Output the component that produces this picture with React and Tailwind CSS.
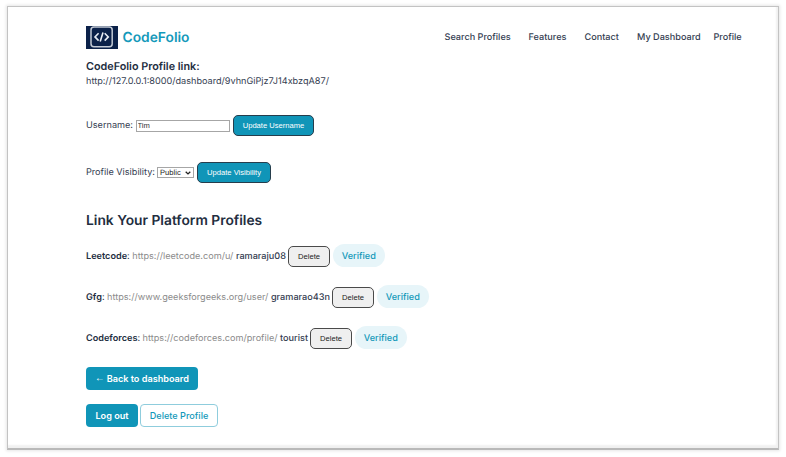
const navItems = [
  { label: "Search Profiles", cls: "w-[84px]" },
  { label: "Features", cls: "w-[56px]" },
  { label: "Contact", cls: "w-[52.5px]" },
  { label: "My Dashboard", cls: "w-[76.5px]" },
  { label: "Profile", cls: "w-[29px]" },
];

const platforms = [
  { name: "Leetcode", url: "https://leetcode.com/u/", user: "ramaraju08", text: "w-[202px]" },
  { name: "Gfg", url: "https://www.geeksforgeeks.org/user/", user: "gramarao43n", text: "w-[246px]" },
  { name: "Codeforces", url: "https://codeforces.com/profile/", user: "tourist", text: "w-[224px]" },
];

function Logo() {
  return (
    <svg width="32" height="23" viewBox="0 0 32 23" fill="none">
      <rect width="32" height="23" fill="#0b2149" />
      <rect x="5" y="1" width="21.2" height="19.7" rx="3" stroke="#c3cad5" strokeWidth="1.5" />
      <path d="M12.6 7.2 9 10.9l3.6 3.7M18.7 7.2l3.6 3.7-3.6 3.7M17 6.4l-2.8 9.2" stroke="#e8edf4" strokeWidth="1.6" />
    </svg>
  );
}

function SubmitButton({ children, className }) {
  return (
    <button
      className={`h-[21px] shrink-0 whitespace-nowrap rounded-[5px] border border-[#263d4c] bg-[#1095b8] font-['Liberation_Sans',Arial,sans-serif] text-[7.6px] text-white ${className}`}
    >
      {children}
    </button>
  );
}

export default function App() {
  return (
    <div className="h-[457px] w-[786px] overflow-hidden bg-white pl-[7px] pt-[6px] font-['Inter',sans-serif] text-[9.15px] leading-[14px] text-[#354052] [text-rendering:geometricPrecision]">
      <main className="h-[444px] w-[772px] border border-[#c3c3c3] border-b-2 border-b-[#b9b9b9] bg-white pl-[78px] pt-[19px] shadow-[0_0_3px_1px_rgba(0,0,0,0.1),inset_-2px_-3px_2px_rgba(0,0,0,0.06)]">
        <header className="flex h-[23px] items-center">
          <Logo />
          <span className="ml-[4.5px] w-[322px] shrink-0 text-[13.8px] font-semibold leading-5 text-[#1499ba]">CodeFolio</span>
          <nav className="flex whitespace-nowrap pt-[1px] font-medium">
            {navItems.map((item) => (
              <a key={item.label} className={`shrink-0 ${item.cls}`}>{item.label}</a>
            ))}
          </nav>
        </header>

        <h3 className="mt-[10px] text-[10.8px] font-semibold leading-[15px] text-[#222d40]">CodeFolio Profile link:</h3>
        <p className="mt-[1px]">http://127.0.0.1:8000/dashboard/9vhnGiPjz7J14xbzqA87/</p>

        <form className="mt-[26px] flex h-[21px] items-center">
          <label className="w-[49.5px] shrink-0 whitespace-nowrap">Username:</label>
          <input
            defaultValue="Tim"
            className="h-[12px] w-[94.5px] border border-[#a6a6a6] bg-white px-[1px] font-['Liberation_Sans',Arial,sans-serif] text-[7.6px] leading-[10px] text-[#333]"
          />
          <SubmitButton className="ml-[3px] w-[81px]">Update Username</SubmitButton>
        </form>

        <form className="mt-[26px] flex h-[21px] items-center">
          <label className="w-[71px] shrink-0 whitespace-nowrap pt-[1px]">Profile Visibility:</label>
          <div className="flex h-[11px] w-[37px] items-center justify-between border border-[#a6a6a6] pl-[2px] pr-[2px] font-['Liberation_Sans',Arial,sans-serif] text-[7.6px] leading-[10px] text-[#222]">
            <span>Public</span>
            <svg width="6" height="4" viewBox="0 0 6 4" fill="none">
              <path d="m.7.7 2.3 2.2L5.3.7" stroke="#222" strokeWidth="1.3" />
            </svg>
          </div>
          <SubmitButton className="ml-[3px] w-[74px]">Update Visibility</SubmitButton>
        </form>

        <h2 className="mt-[28px] text-[13.8px] font-semibold leading-5 text-[#222d40]">Link Your Platform Profiles</h2>

        <div className="mt-[13px] flex flex-col gap-[18px]">
          {platforms.map((p) => (
            <div key={p.name} className="flex h-[23px] items-center">
              <span className={`shrink-0 whitespace-nowrap pt-[2px] ${p.text}`}>
                <b className="font-semibold text-[#222d40]">{p.name}</b>: <span className="text-[#8b8b8b]">{p.url}</span>{" "}
                <span className="font-medium">{p.user}</span>
              </span>
              <button className="mt-[1px] h-[21px] w-[42px] rounded-[5px] border border-[#4a4a4a] bg-[#efefef] pt-[1px] font-['Liberation_Sans',Arial,sans-serif] text-[7.6px] text-[#222]">
                Delete
              </button>
              <span className="ml-[3px] h-[23px] w-[51.5px] rounded-full bg-[#e7f5f9] text-center font-medium leading-[25px] text-[#1499ba]">
                Verified
              </span>
            </div>
          ))}
        </div>

        <button className="mt-[18px] flex h-[23px] w-[112px] items-center justify-center gap-[2px] whitespace-nowrap rounded-[4px] bg-[#1095b8] pt-[1px] font-semibold text-white">
          <span className="-mt-[2px] font-['Liberation_Sans',Arial,sans-serif] text-[9.6px] font-normal">←</span>
          <span>Back to dashboard</span>
        </button>
        <div className="mt-[14px] flex gap-[2px]">
          <button className="h-[23px] w-[52px] rounded-[4px] bg-[#1095b8] pt-[1px] font-semibold text-white">Log out</button>
          <button className="h-[23px] w-[78px] rounded-[4px] border border-[#8fcddd] bg-white pt-[1px] font-medium text-[#1499ba]">
            Delete Profile
          </button>
        </div>
      </main>
    </div>
  );
}
